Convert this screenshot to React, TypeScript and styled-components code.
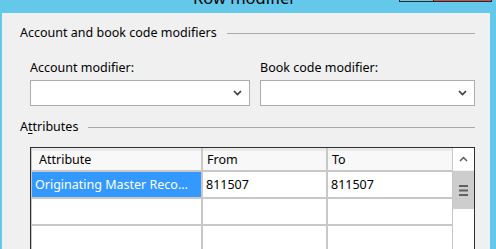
import React from "react";
import styled, { createGlobalStyle } from "styled-components";

const GlobalStyle = createGlobalStyle`
  html, body {
    margin: 0;
    padding: 0;
  }
  body {
    background: #63c8ea;
    font-family: "Noto Sans", "Open Sans", sans-serif;
    color: #000;
  }
`;

const Frame = styled.div`
  width: 496px;
  height: 249px;
  overflow: hidden;
  background: #63c8ea;
  display: flex;
  flex-direction: column;
`;

const TitleBar = styled.div`
  height: 13px;
  flex: none;
  display: flex;
  align-items: flex-start;
  padding-left: 193px;
  overflow: hidden;
`;

const Title = styled.div`
  font-size: 16.5px;
  line-height: 16px;
  margin-top: -10px;
  white-space: nowrap;
`;

const Captions = styled.div`
  margin-left: auto;
  margin-right: 4px;
  display: flex;
`;

const CaptionButton = styled.div<{ $close?: boolean }>`
  width: ${(p) => (p.$close ? "57px" : "33px")};
  height: 1px;
  border-left: 1px solid #2a2a2a;
  border-bottom: 1px solid #2a2a2a;
  border-right: ${(p) => (p.$close ? "1px solid #2a2a2a" : "none")};
  background: ${(p) => (p.$close ? "#c75050" : "transparent")};
`;

const Client = styled.div`
  flex: 1;
  margin: 0 6px 0 2px;
  background: #f0f0f0;
  padding: 12px 15px 0 18px;
  font-size: 12.5px;
  line-height: 16px;
`;

const GroupHeader = styled.div<{ $gap?: number }>`
  display: flex;
  align-items: center;
  gap: 10px;
  margin-top: ${(p) => p.$gap ?? 0}px;
  white-space: nowrap;
`;

const GroupRule = styled.div`
  flex: 1;
  height: 1px;
  background: #a9a9a9;
`;

const GroupBody = styled.div<{ $top: number }>`
  padding-left: 10px;
  margin-top: ${(p) => p.$top}px;
`;

const FieldGrid = styled.div`
  display: grid;
  grid-template-columns: 220px 1fr;
  column-gap: 10px;
`;

const Field = styled.div`
  display: flex;
  flex-direction: column;
  gap: 4px;
`;

const Combo = styled.div`
  height: 24px;
  border: 1px solid #acacac;
  background: #fff;
  display: flex;
  align-items: center;
  justify-content: flex-end;
  padding-right: 7px;
`;

const TableFrame = styled.div`
  border: 1px solid #2f2f2f;
  display: flex;
  height: 120px;
  background: #fff;
`;

const Grid = styled.div`
  flex: 1;
  display: grid;
  grid-template-columns: 169px 123px 1fr;
  grid-auto-rows: 25px;
  grid-template-rows: 22px;
  gap: 2px;
  padding-left: 1px;
  background: #c8c8c8;
  align-content: start;
`;

const HeaderCell = styled.div<{ $pad: number }>`
  background: #f8f8f8;
  border-top: 3px solid #e9e9e9;
  padding-left: ${(p) => p.$pad}px;
  line-height: 18px;
  white-space: nowrap;
`;

const Cell = styled.div<{ $selected?: boolean }>`
  background: ${(p) => (p.$selected ? "#3399ff" : "#fff")};
  color: ${(p) => (p.$selected ? "#fff" : "#000")};
  padding-left: 3px;
  line-height: 25px;
  white-space: nowrap;
  overflow: hidden;
`;

const ScrollBar = styled.div`
  width: 21px;
  border-left: 1px solid #c8c8c8;
  display: flex;
  flex-direction: column;
  background: #fff;
`;

const ScrollArrow = styled.div`
  height: 22px;
  display: flex;
  align-items: center;
  justify-content: center;
  background: #fff;
  border-bottom: 1px solid #f0f0f0;
`;

const Thumb = styled.div`
  height: 38px;
  background: #cdcdcd;
  display: flex;
  align-items: center;
  justify-content: center;
`;

const Mnemonic = styled.span`
  text-decoration: underline;
  text-underline-offset: 2px;
`;

function ChevronDown() {
  return (
    <svg width="9" height="6" viewBox="0 0 9 6">
      <polyline points="1,1 4.5,4.5 8,1" fill="none" stroke="#3a3a3a" strokeWidth="1.6" />
    </svg>
  );
}

function ChevronUp() {
  return (
    <svg width="9" height="6" viewBox="0 0 9 6">
      <polyline points="1,5 4.5,1.5 8,5" fill="none" stroke="#5a5a5a" strokeWidth="1.5" />
    </svg>
  );
}

function Grip() {
  return (
    <svg width="9" height="11" viewBox="0 0 9 11">
      <rect x="0" y="0" width="9" height="2" fill="#606060" />
      <rect x="0" y="4.5" width="9" height="2" fill="#606060" />
      <rect x="0" y="9" width="9" height="2" fill="#606060" />
    </svg>
  );
}

const rows = [
  { attribute: "Originating Master Reco…", from: "811507", to: "811507" },
  { attribute: "", from: "", to: "" },
  { attribute: "", from: "", to: "" },
  { attribute: "", from: "", to: "" },
];

export default function App() {
  return (
    <Frame>
      <GlobalStyle />
      <TitleBar>
        <Title>Row modifier</Title>
        <Captions>
          <CaptionButton />
          <CaptionButton $close />
        </Captions>
      </TitleBar>
      <Client>
        <GroupHeader>
          <span>Account and book code modifiers</span>
          <GroupRule />
        </GroupHeader>
        <GroupBody $top={19}>
          <FieldGrid>
            <Field>
              <span>Account modifier:</span>
              <Combo>
                <ChevronDown />
              </Combo>
            </Field>
            <Field>
              <span>Book code modifier:</span>
              <Combo>
                <ChevronDown />
              </Combo>
            </Field>
          </FieldGrid>
        </GroupBody>
        <GroupHeader $gap={13}>
          <span>
            A<Mnemonic>t</Mnemonic>tributes
          </span>
          <GroupRule />
        </GroupHeader>
        <GroupBody $top={12}>
          <TableFrame>
            <Grid>
              <HeaderCell $pad={7}>Attribute</HeaderCell>
              <HeaderCell $pad={4}>From</HeaderCell>
              <HeaderCell $pad={4}>To</HeaderCell>
              {rows.map((r, i) => (
                <React.Fragment key={i}>
                  <Cell $selected={i === 0}>{r.attribute}</Cell>
                  <Cell>{r.from}</Cell>
                  <Cell>{r.to}</Cell>
                </React.Fragment>
              ))}
            </Grid>
            <ScrollBar>
              <ScrollArrow>
                <ChevronUp />
              </ScrollArrow>
              <Thumb>
                <Grip />
              </Thumb>
            </ScrollBar>
          </TableFrame>
        </GroupBody>
      </Client>
    </Frame>
  );
}
